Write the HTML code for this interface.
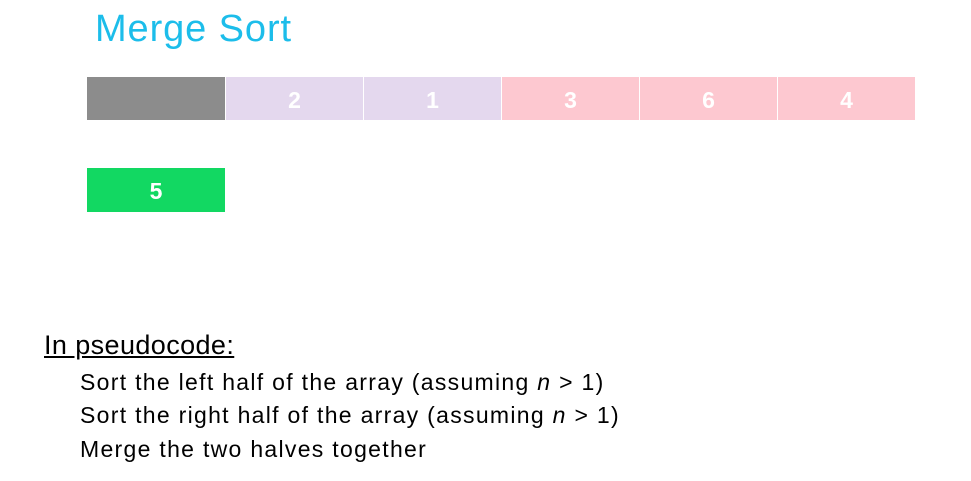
<!DOCTYPE html>
<html><head><style>
body{margin:0;width:971px;height:481px;background:#fff;position:relative;overflow:hidden;font-family:"Liberation Sans",sans-serif}
.t{position:absolute;left:95px;top:8px;font-size:38px;color:#1cbdea;letter-spacing:0.9px}
.c{position:absolute;top:77px;height:43px;width:137px;color:#fff;font-weight:bold;font-size:23px;text-align:center;line-height:46px}
.h{position:absolute;left:44px;top:330px;font-size:27px;letter-spacing:0.4px;text-decoration:underline;color:#000}
.l{position:absolute;left:80px;font-size:23px;letter-spacing:1.3px;color:#000}
</style></head><body>
<div class="t">Merge Sort</div>
<div class="c" style="left:87px;width:138px;background:#8c8c8c"></div>
<div class="c" style="left:226px;background:#e4d8ee">2</div>
<div class="c" style="left:364px;background:#e4d8ee">1</div>
<div class="c" style="left:502px;background:#fdc8d0">3</div>
<div class="c" style="left:640px;background:#fdc8d0">6</div>
<div class="c" style="left:778px;background:#fdc8d0">4</div>
<div class="c" style="left:87px;top:168px;height:44px;width:138px;background:#12d862">5</div>
<div class="h">In pseudocode:</div>
<div class="l" style="top:369px">Sort the left half of the array (assuming <i>n</i> &gt; 1)</div>
<div class="l" style="top:402px">Sort the right half of the array (assuming <i>n</i> &gt; 1)</div>
<div class="l" style="top:436px">Merge the two halves together</div>
</body></html>
